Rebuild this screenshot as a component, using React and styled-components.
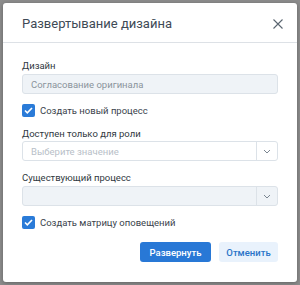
import React from "react";
import styled, { createGlobalStyle } from "styled-components";

const Global = createGlobalStyle`
  body {
    margin: 0;
    background: #8c8c8c;
    font-family: Roboto, "Liberation Sans", sans-serif;
  }
  * { box-sizing: border-box; }
`;

const Backdrop = styled.div`
  width: 300px;
  height: 285px;
  padding: 3px 3px 3px 3px;
  background: #8c8c8c;
`;

const Dialog = styled.div`
  background: #fff;
  border-radius: 3px;
  height: 279px;
  box-shadow: 0 1px 4px rgba(0, 0, 0, 0.3);
  display: flex;
  flex-direction: column;
`;

const Header = styled.div`
  display: flex;
  align-items: center;
  justify-content: space-between;
  height: 40px;
  padding: 2px 14px 0 19px;
  border-bottom: 1px solid #dde1e6;
`;

const Title = styled.h1`
  margin: 0;
  font-size: 13px;
  font-weight: 400;
  color: #3e4a56;
`;

const Close = styled.button`
  border: 0;
  background: none;
  padding: 0;
  width: 10px;
  height: 10px;
  display: flex;
  cursor: pointer;
`;

const Body = styled.div`
  padding: 17px 19px 0;
  display: flex;
  flex-direction: column;
`;

const Label = styled.div`
  font-size: 9.5px;
  line-height: 12px;
  color: #303840;
  margin-bottom: ${(p) => p.$mb ?? 2}px;
`;

const Field = styled.div`
  height: 20px;
  border: 1px solid #dce2e8;
  border-radius: 3px;
  background: ${(p) => (p.$disabled ? "#eff3f7" : "#fff")};
  display: flex;
  align-items: center;
  margin-bottom: ${(p) => p.$mb || 0}px;
`;

const FieldText = styled.span`
  flex: 1;
  padding-left: 8px;
  font-size: 9.5px;
  color: ${(p) => (p.$placeholder ? "#b8c0c8" : "#8a939c")};
`;

const Arrow = styled.span`
  width: 21px;
  height: 100%;
  border-left: 1px solid #dce2e8;
  display: flex;
  align-items: center;
  justify-content: center;
`;

const CheckRow = styled.label`
  display: flex;
  align-items: center;
  gap: 5px;
  height: 13px;
  font-size: 9.5px;
  color: #3a434c;
  margin-bottom: ${(p) => p.$mb || 0}px;
`;

const Box = styled.span`
  width: 13px;
  height: 13px;
  border-radius: 2px;
  background: #2a7bd8;
  display: flex;
  align-items: center;
  justify-content: center;
`;

const Footer = styled.div`
  display: flex;
  justify-content: flex-end;
  gap: 8px;
`;

const Button = styled.button`
  height: 20px;
  width: ${(p) => p.$w}px;
  padding: 0;
  border: 0;
  border-radius: 3px;
  font-family: inherit;
  font-size: 9.5px;
  font-weight: 500;
  background: ${(p) => (p.$primary ? "#2878d6" : "#e9f2fc")};
  color: ${(p) => (p.$primary ? "#fff" : "#2a74c8")};
`;

const Chevron = () => (
  <svg width="8" height="5" viewBox="0 0 8 5">
    <path d="M1 1l3 3 3-3" fill="none" stroke="#7a8590" strokeWidth="1" />
  </svg>
);

const Check = () => (
  <svg width="9" height="7" viewBox="0 0 9 7">
    <path d="M1 3.5l2.3 2.3L8 1" fill="none" stroke="#fff" strokeWidth="1.6" />
  </svg>
);

export default function App() {
  return (
    <Backdrop>
      <Global />
      <Dialog>
        <Header>
          <Title>Развертывание дизайна</Title>
          <Close>
            <svg width="10" height="10" viewBox="0 0 10 10">
              <path d="M0.5 0.5l9 9M9.5 0.5l-9 9" stroke="#5a6570" strokeWidth="1.1" />
            </svg>
          </Close>
        </Header>
        <Body>
          <Label>Дизайн</Label>
          <Field $disabled $mb={10}>
            <FieldText>Согласование оригинала</FieldText>
          </Field>
          <CheckRow $mb={11}>
            <Box><Check /></Box>
            Создать новый процесс
          </CheckRow>
          <Label $mb={1}>Доступен только для роли</Label>
          <Field $mb={11}>
            <FieldText $placeholder>Выберите значение</FieldText>
            <Arrow><Chevron /></Arrow>
          </Field>
          <Label>Существующий процесс</Label>
          <Field $disabled $mb={10}>
            <FieldText />
            <Arrow><Chevron /></Arrow>
          </Field>
          <CheckRow $mb={13}>
            <Box><Check /></Box>
            Создать матрицу оповещений
          </CheckRow>
          <Footer>
            <Button $primary $w={71}>Развернуть</Button>
            <Button $w={59}>Отменить</Button>
          </Footer>
        </Body>
      </Dialog>
    </Backdrop>
  );
}
